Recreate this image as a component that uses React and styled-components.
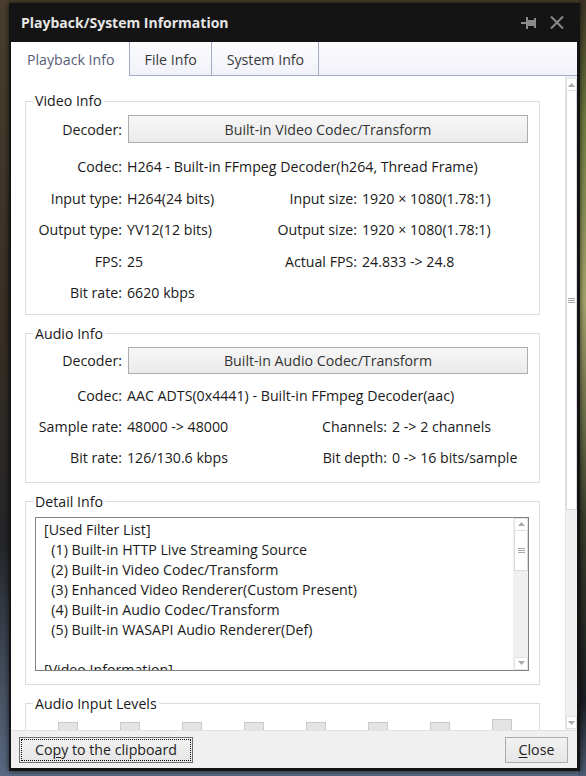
import styled, { createGlobalStyle } from "styled-components";

const GlobalStyle = createGlobalStyle`
  html, body {
    margin: 0;
    padding: 0;
  }
  body {
    width: 586px;
    height: 776px;
    overflow: hidden;
    font-family: "Open Sans", "Noto Sans", sans-serif;
    background:
      linear-gradient(180deg, #3b3323 0px, #6f7a3e 120px, #a8a86e 300px, #3a3d2a 520px, #1b1d22 700px, #4d5c74 776px) right / 8px 100% no-repeat,
      linear-gradient(180deg, #4a3f2f 0%, #3a3024 40%, #25262a 70%, #5a6b84 100%);
  }
`;

const Desktop = styled.div`
  box-sizing: border-box;
  height: 776px;
  padding: 3px 6px 5px 9px;
`;

const Window = styled.div`
  box-sizing: border-box;
  width: 571px;
  height: 768px;
  background: #141414;
  display: flex;
  flex-direction: column;
  padding: 0 3px 3px 2px;
  box-shadow: 0 0 6px rgba(0, 0, 0, 0.7);
`;

const TitleBar = styled.div`
  height: 39px;
  flex: none;
  display: flex;
  align-items: center;
  padding: 0 13px 0 10px;
  color: #e6e6e6;
  font-size: 14px;
  font-weight: 700;
`;

const TitleIcons = styled.div`
  margin-left: auto;
  display: flex;
  align-items: center;
  gap: 14px;
  color: #8a8a8a;
`;

const Client = styled.div`
  flex: 1;
  min-height: 0;
  display: flex;
  flex-direction: column;
  background: #fff;
  color: #1a1a1a;
  font-size: 14.2px;
`;

const TabStrip = styled.div`
  height: 34px;
  flex: none;
  box-sizing: border-box;
  display: flex;
  background: linear-gradient(180deg, #fcfcfe 0%, #f1f2f9 100%);
  border-bottom: 1px solid #a4abc6;
`;

const Tab = styled.div`
  display: flex;
  align-items: center;
  padding: 0 14px 0 ${(p) => (p.$first ? 16 : 15)}px;
  border-right: 1px solid #a4abc6;
  height: 34px;
  box-sizing: border-box;
  color: ${(p) => (p.$active ? "#585d78" : "#3a3a3a")};
  background: ${(p) => (p.$active ? "#fff" : "transparent")};
  margin-bottom: ${(p) => (p.$active ? "-1px" : "0")};
  position: relative;
`;

const Main = styled.div`
  flex: 1;
  min-height: 0;
  display: flex;
  overflow: hidden;
`;

const Scroller = styled.div`
  flex: 1;
  min-width: 0;
  display: flex;
  flex-direction: column;
  gap: 9px;
  padding: 15px 25px 0 14px;
  overflow: hidden;
`;

const Group = styled.fieldset`
  margin: 0;
  min-width: 0;
  flex: none;
  border: 1px solid #dcdcdc;
  padding: ${(p) => p.$pt}px 0 ${(p) => p.$pb}px 0;
`;

const Legend = styled.legend`
  margin-left: 7px;
  padding: 0 2px;
  line-height: 20px;
  color: #1a1a1a;
`;

const DecoderRow = styled.div`
  display: flex;
  align-items: center;
  gap: 6px;
  padding-right: 11px;
  height: ${(p) => p.$h}px;
`;

const RowLabel = styled.span`
  width: 96px;
  flex: none;
  text-align: right;
`;

const DecoderButton = styled.div`
  flex: 1;
  align-self: stretch;
  display: flex;
  align-items: center;
  justify-content: center;
  border: 1px solid #adadad;
  background: linear-gradient(180deg, #f6f6f6 0%, #ebebeb 100%);
  color: #333;
`;

const InfoGrid = styled.div`
  display: grid;
  grid-template-columns: 96px ${(p) => p.$valueWidth}px 100px 1fr;
  column-gap: 5px;
  grid-auto-rows: ${(p) => p.$rowH}px;
  align-items: center;
  margin-top: ${(p) => p.$mt}px;
  white-space: nowrap;
`;

const Label = styled.span`
  text-align: right;
`;

const Value = styled.span`
  grid-column: ${(p) => (p.$wide ? "2 / -1" : "auto")};
`;

const DetailBox = styled.div`
  margin: 0 10px 0 9px;
  height: 154px;
  box-sizing: border-box;
  border: 1px solid #828282;
  display: flex;
  overflow: hidden;
`;

const DetailText = styled.div`
  flex: 1;
  padding: 2px 8px;
  white-space: pre;
  line-height: 20px;
  overflow: hidden;
`;

const ScrollBar = styled.div`
  width: ${(p) => p.$w}px;
  flex: none;
  box-sizing: border-box;
  display: flex;
  flex-direction: column;
  background: #f0f0f0;
  border-left: 1px solid ${(p) => (p.$inner ? "#f0f0f0" : "#e3e3e3")};
  padding: ${(p) => p.$pt}px 0 ${(p) => p.$pb}px;
`;

const ScrollArrow = styled.div`
  height: 13px;
  flex: none;
  box-sizing: border-box;
  display: flex;
  align-items: center;
  justify-content: center;
  background: #fff;
  border: 1px solid #e2e2e2;
`;

const ScrollThumb = styled.div`
  height: ${(p) => p.$h}px;
  flex: none;
  box-sizing: border-box;
  display: flex;
  align-items: center;
  justify-content: center;
  background: #fff;
  border: 1px solid #dadada;
  border-top: none;
`;

const ScrollTrack = styled.div`
  flex: 1;
`;

const Levels = styled.div`
  display: flex;
  gap: 42px;
  padding: 8px 0 0 32px;
  height: 30px;
`;

const LevelBar = styled.div`
  width: 20px;
  flex: none;
  margin-top: ${(p) => (p.$tall ? -3 : 0)}px;
  height: 30px;
  box-sizing: border-box;
  background: #e4e4e4;
  border: 1px solid #c9c9c9;
`;

const Footer = styled.div`
  height: 38px;
  flex: none;
  box-sizing: border-box;
  display: flex;
  align-items: center;
  justify-content: space-between;
  padding: 0 9px 0 8px;
  background: #f0f0f0;
  border-top: 1px solid #e2e2e2;
`;

const Button = styled.div`
  position: relative;
  height: 26px;
  width: ${(p) => p.$w}px;
  box-sizing: border-box;
  display: flex;
  align-items: center;
  justify-content: center;
  border: 1px solid ${(p) => (p.$focused ? "#6f6f6f" : "#acacac")};
  background: linear-gradient(180deg, #f2f2f2 0%, #e6e6e6 100%);
  color: #222;
  font-size: 14.2px;
  &::after {
    content: "";
    position: absolute;
    inset: 1px;
    border: 1px dotted #111;
    display: ${(p) => (p.$focused ? "block" : "none")};
  }
  u {
    text-underline-offset: 2px;
  }
`;

const Arrow = ({ down }) => (
  <svg width="7" height="4" viewBox="0 0 7 4">
    <path d={down ? "M0 0h7L3.5 4z" : "M0 4h7L3.5 0z"} fill="#a9a9a9" />
  </svg>
);

const Grip = () => (
  <svg width="7" height="5" viewBox="0 0 7 5">
    <path d="M0 0.5h7M0 2.5h7M0 4.5h7" stroke="#a9a9a9" strokeWidth="1" />
  </svg>
);

const PinIcon = () => (
  <svg width="15" height="12" viewBox="0 0 15 12" fill="currentColor">
    <rect x="0" y="5" width="5" height="2" />
    <rect x="5" y="0" width="2" height="12" />
    <rect x="7" y="3" width="6" height="6" />
    <rect x="13" y="1" width="2" height="10" />
  </svg>
);

const CloseIcon = () => (
  <svg width="14" height="13" viewBox="0 0 14 13">
    <path d="M1 0.5l12 12M13 0.5l-12 12" stroke="currentColor" strokeWidth="2" />
  </svg>
);

const Scroll = ({ w, pt, pb, thumb, inner }) => (
  <ScrollBar $w={w} $pt={pt} $pb={pb} $inner={inner}>
    <ScrollArrow>
      <Arrow />
    </ScrollArrow>
    <ScrollThumb $h={thumb}>
      <Grip />
    </ScrollThumb>
    <ScrollTrack />
    <ScrollArrow>
      <Arrow down />
    </ScrollArrow>
  </ScrollBar>
);

const videoRows = [
  ["Input type:", "H264(24 bits)", "Input size:", "1920 × 1080(1.78:1)"],
  ["Output type:", "YV12(12 bits)", "Output size:", "1920 × 1080(1.78:1)"],
  ["FPS:", "25", "Actual FPS:", "24.833 -> 24.8"],
  ["Bit rate:", "6620 kbps"],
];

const audioRows = [
  ["Sample rate:", "48000 -> 48000", "Channels:", "2 -> 2 channels"],
  ["Bit rate:", "126/130.6 kbps", "Bit depth:", "0 -> 16 bits/sample"],
];

const detailLines = [
  "[Used Filter List]",
  "  (1) Built-in HTTP Live Streaming Source",
  "  (2) Built-in Video Codec/Transform",
  "  (3) Enhanced Video Renderer(Custom Present)",
  "  (4) Built-in Audio Codec/Transform",
  "  (5) Built-in WASAPI Audio Renderer(Def)",
  "",
  "[Video Information]",
  "  Codec: H264",
];

const Row = ({ cells }) => (
  <>
    <Label>{cells[0]}</Label>
    <Value $wide={cells.length < 3}>{cells[1]}</Value>
    {cells.length > 2 && (
      <>
        <Label>{cells[2]}</Label>
        <Value>{cells[3]}</Value>
      </>
    )}
  </>
);

const InfoRows = ({ codec, rows, valueWidth, mt, rowH }) => (
  <InfoGrid $valueWidth={valueWidth} $mt={mt} $rowH={rowH}>
    <Label>Codec:</Label>
    <Value $wide>{codec}</Value>
    {rows.map((r) => (
      <Row key={r[0]} cells={r} />
    ))}
  </InfoGrid>
);

export default function App() {
  return (
    <Desktop>
      <GlobalStyle />
      <Window>
        <TitleBar>
          Playback/System Information
          <TitleIcons>
            <PinIcon />
            <CloseIcon />
          </TitleIcons>
        </TitleBar>
        <Client>
          <TabStrip>
            <Tab $active $first>
              Playback Info
            </Tab>
            <Tab>File Info</Tab>
            <Tab>System Info</Tab>
          </TabStrip>
          <Main>
            <Scroller>
              <Group $pt={4} $pb={5}>
                <Legend>Video Info</Legend>
                <DecoderRow $h={28}>
                  <RowLabel>Decoder:</RowLabel>
                  <DecoderButton>Built-in Video Codec/Transform</DecoderButton>
                </DecoderRow>
                <InfoRows
                  codec="H264 - Built-in FFmpeg Decoder(h264, Thread Frame)"
                  rows={videoRows}
                  valueWidth={125}
                  mt={8}
                  rowH={31.5}
                />
              </Group>
              <Group $pt={3} $pb={9}>
                <Legend>Audio Info</Legend>
                <DecoderRow $h={27}>
                  <RowLabel>Decoder:</RowLabel>
                  <DecoderButton>Built-in Audio Codec/Transform</DecoderButton>
                </DecoderRow>
                <InfoRows
                  codec="AAC ADTS(0x4441) - Built-in FFmpeg Decoder(aac)"
                  rows={audioRows}
                  valueWidth={155}
                  mt={6}
                  rowH={31}
                />
              </Group>
              <Group $pt={5} $pb={13}>
                <Legend>Detail Info</Legend>
                <DetailBox>
                  <DetailText>{detailLines.join("\n")}</DetailText>
                  <Scroll w={15} pt={0} pb={0} thumb={40} inner />
                </DetailBox>
              </Group>
              <Group $pt={0} $pb={0}>
                <Legend>Audio Input Levels</Legend>
                <Levels>
                  {[0, 1, 2, 3, 4, 5, 6, 7].map((i) => (
                    <LevelBar key={i} $tall={i === 7} />
                  ))}
                </Levels>
              </Group>
            </Scroller>
            <Scroll w={12} pt={2} pb={1} thumb={419} />
          </Main>
          <Footer>
            <Button $w={174} $focused>
              <span>
                Co<u>p</u>y to the clipboard
              </span>
            </Button>
            <Button $w={63}>
              <span>
                <u>C</u>lose
              </span>
            </Button>
          </Footer>
        </Client>
      </Window>
    </Desktop>
  );
}
